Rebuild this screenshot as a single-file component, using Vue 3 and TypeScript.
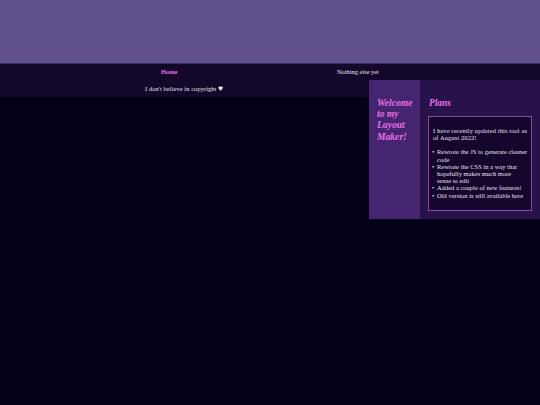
<script setup lang="ts">
const items: string[] = [
  'Rewrote the JS to generate cleaner code',
  'Rewrote the CSS in a way that hopefully makes much more sense\u00a0to\u00a0edit',
  'Added a couple of new features!',
]
</script>

<template>
  <div class="page">
    <header class="banner"></header>
    <nav class="nav">
      <a class="link active">Home</a>
      <a class="link">Nothing else yet</a>
    </nav>
    <div class="body">
      <footer class="foot"><span>I don't believe in copyright <b class="heart">♥</b></span></footer>
      <section class="panel">
        <aside class="side">
          <h1>Welcome to my Layout Maker!</h1>
        </aside>
        <div class="content">
          <h2>Plans</h2>
          <div class="box">
            <p>I have recently updated this tool as of August 2022!</p>
            <ul>
              <li v-for="item in items" :key="item">{{ item }}</li>
              <li>Old version is still available here</li>
            </ul>
          </div>
        </div>
      </section>
    </div>
  </div>
</template>

<style>
html, body { margin: 0; background: #05001a; }
</style>

<style scoped>
.page {
  width: 540px;
  height: 405px;
  overflow: hidden;
  background: #05001a;
  font-family: "Liberation Serif", serif;
  font-size: 6.4px;
  line-height: 7.2px;
  color: #e9e2f2;
}
.banner {
  height: 63px;
  background: #5f4f8b;
  border-bottom: 1px solid #3a2f63;
}
.nav {
  height: 15px;
  padding-bottom: 1px;
  background: #130829;
  display: flex;
  align-items: center;
  padding-left: 161px;
}
.link { width: 176px; }
.active { width: 176px; color: #e86ee8; font-weight: 700; }
.body { display: flex; align-items: flex-start; }
.foot {
  width: 369px;
  height: 17px;
  box-sizing: border-box;
  padding-right: 1px;
  letter-spacing: 0.09px;
  background: #130829;
  display: flex;
  align-items: center;
  justify-content: center;
}
.heart { font-size: 8px; font-weight: 400; color: #fff; }
.panel {
  width: 171px;
  height: 139px;
  display: flex;
  background: #27134a;
}
.side {
  width: 51px;
  box-sizing: border-box;
  background: #45256f;
  padding: 17px 5px 0 8px;
}
h1 {
  margin: 0;
  font-size: 9.6px;
  line-height: 11.2px;
  font-weight: 700;
  font-style: italic;
  color: #e86ee8;
}
.content { flex: 1; padding: 17px 8px 0; min-width: 0; }
h2 {
  margin: 1px 0 7px;
  padding-left: 1px;
  font-size: 9.4px;
  line-height: 11px;
  font-weight: 700;
  font-style: italic;
  color: #e86ee8;
}
.box {
  height: 95px;
  box-sizing: border-box;
  background: #14062c;
  border: 1px solid #8a4a9e;
  padding: 10px 3px 0 4px;
}
p { margin: 0 0 7px; letter-spacing: 0.14px; }
ul { margin: 0; padding: 0 0 0 4px; list-style: none; letter-spacing: 0.05px; }
li::before {
  content: "•";
  display: inline-block;
  width: 5px;
  margin-left: -5px;
}
</style>
